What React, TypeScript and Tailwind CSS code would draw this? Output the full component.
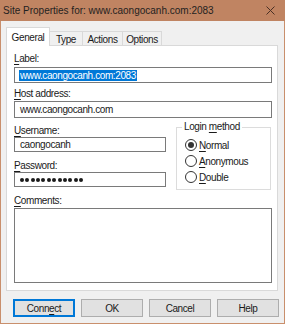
import React from 'react';

function Mn({ text, at }: { text: string; at: number }) {
  // underlines the mnemonic letter like a Win32 dialog
  return (
    <>
      {text.slice(0, at)}
      <span className="underline underline-offset-[1.5px] decoration-[0.8px]">{text[at]}</span>
      {text.slice(at + 1)}
    </>
  );
}

function Field({ value, className = '', selected = false }: { value: string; className?: string; selected?: boolean }) {
  return (
    <div className={`border border-[#7a7a7a] bg-white flex items-center pl-[4px] ${className}`}>
      {selected ? (
        <span className="bg-[#0078d7] text-white leading-[11px] px-px">{value}</span>
      ) : (
        <span className="text-[#1a1a1a] leading-[11px] pl-px">{value}</span>
      )}
    </div>
  );
}

function Radio({ label, at, checked = false }: { label: string; at: number; checked?: boolean }) {
  return (
    <div className="flex items-center h-[16px]">
      <div className="w-[12px] h-[12px] rounded-full border border-[#333] bg-white flex items-center justify-center">
        {checked && <div className="w-[6px] h-[6px] rounded-full bg-[#333]" />}
      </div>
      <span className="ml-[2px] text-[#1a1a1a]">
        <Mn text={label} at={at} />
      </span>
    </div>
  );
}

function Btn({ label, at, primary = false }: { label: string; at?: number; primary?: boolean }) {
  return (
    <div
      className={`w-[62px] h-[18px] bg-[#e1e1e1] flex items-center justify-center text-[#1a1a1a] ${
        primary ? 'border-2 border-[#0078d7]' : 'border border-[#adadad]'
      }`}
    >
      {at === undefined ? label : <Mn text={label} at={at} />}
    </div>
  );
}

export default function App() {
  return (
    <div className="w-[285px] h-[324px] bg-[#f0f0f0] border-x border-b border-[#c98f6c] flex flex-col text-[10px] tracking-[-0.4px] font-['Liberation_Sans',Arial,sans-serif]">
      {/* title bar */}
      <div className="h-[21px] -mx-px bg-[#c08462] flex items-center justify-between pl-[3px] pr-[10px]">
        <span className="text-[#1f1f1f] text-[10px] tracking-normal leading-none">Site Properties for: www.caongocanh.com:2083</span>
        <svg width="9" height="9" viewBox="0 0 9 9">
          <path d="M0.5 0.5 L8.5 8.5 M8.5 0.5 L0.5 8.5" stroke="#4a3024" strokeWidth="1" fill="none" />
        </svg>
      </div>

      {/* tabs */}
      <div className="flex items-end h-[24px] pl-[5px]">
        <div className="w-[44px] h-[19px] bg-white border border-b-0 border-[#d9d9d9] -mb-px relative z-10 flex items-start justify-center pt-[4px] leading-[11px] text-[#1a1a1a]">
          General
        </div>
        <div className="w-[33px] h-[14px] border-t border-r border-[#d9d9d9] flex items-center justify-center pt-px text-[#1a1a1a]">Type</div>
        <div className="w-[40px] h-[14px] border-t border-r border-[#d9d9d9] flex items-center justify-center pt-px text-[#1a1a1a]">Actions</div>
        <div className="w-[39px] h-[14px] border-t border-r border-[#d9d9d9] flex items-center justify-center pt-px text-[#1a1a1a]">Options</div>
      </div>

      {/* panel */}
      <div className="ml-[5px] w-[272px] h-[246px] bg-white border border-[#d9d9d9] flex flex-col pl-[7px] pr-[5px] pt-[7px] text-[#1a1a1a]">
        <div className="h-[12px] leading-[12px]"><Mn text="Label:" at={0} /></div>
        <Field value="www.caongocanh.com:2083" selected className="h-[16px] mt-[2px]" />
        <div className="h-[12px] leading-[12px] mt-[5px]"><Mn text="Host address:" at={0} /></div>
        <Field value="www.caongocanh.com" className="h-[17px] mt-[1px]" />

        <div className="flex mt-[7px]">
          <div className="w-[152px] flex flex-col">
            <div className="h-[12px] leading-[12px]"><Mn text="Username:" at={0} /></div>
            <Field value="caongocanh" className="h-[15px]" />
            <div className="h-[12px] leading-[12px] mt-[8px]"><Mn text="Password:" at={0} /></div>
            <div className="h-[15px] border border-[#7a7a7a] bg-white flex items-center pl-[5px]">
              <div className="w-[63px] flex justify-between">
                {Array.from({ length: 12 }).map((_, i) => (
                  <span key={i} className="w-[4px] h-[4px] rounded-full bg-[#1a1a1a]" />
                ))}
              </div>
            </div>
          </div>
          <div className="ml-[10px] w-[95px] mt-[2px] h-[63px] border border-[#dcdcdc] relative flex flex-col pl-[8px] pt-[9px]">
            <span className="absolute -top-[7px] left-[5px] bg-white px-[2px] leading-[12px]">
              Login <Mn text="method" at={0} />
            </span>
            <Radio label="Normal" at={0} checked />
            <Radio label="Anonymous" at={0} />
            <Radio label="Double" at={0} />
          </div>
        </div>

        <div className="h-[12px] leading-[12px] mt-[5px]"><Mn text="Comments:" at={0} /></div>
        <div className="h-[75px] border border-[#7a7a7a] bg-white mt-[1px]" />
      </div>

      {/* buttons */}
      <div className="flex gap-[6px] pl-[12px] mt-[8px]">
        <Btn label="Connect" at={4} primary />
        <Btn label="OK" />
        <Btn label="Cancel" />
        <Btn label="Help" />
      </div>
    </div>
  );
}
